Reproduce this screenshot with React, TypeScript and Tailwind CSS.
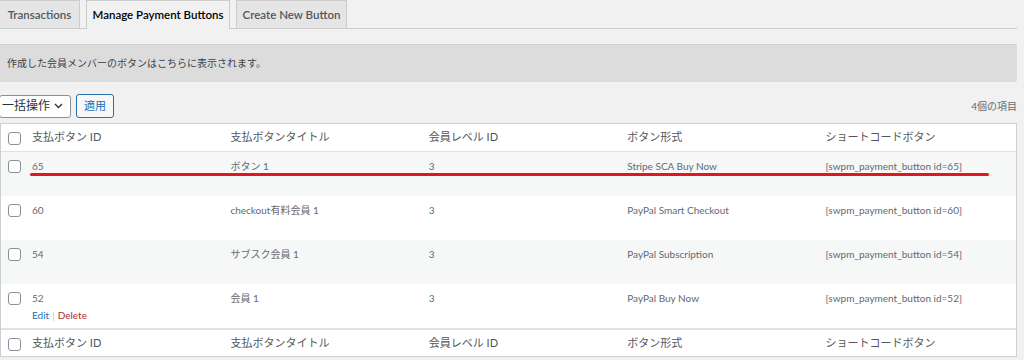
import React from 'react';

type Row = { id: string; title: string; level: string; type: string; actions?: boolean };

const rows: Row[] = [
  { id: '65', title: 'ボタン 1', level: '3', type: 'Stripe SCA Buy Now' },
  { id: '60', title: 'checkout有料会員 1', level: '3', type: 'PayPal Smart Checkout' },
  { id: '54', title: 'サブスク会員 1', level: '3', type: 'PayPal Subscription' },
  { id: '52', title: '会員 1', level: '3', type: 'PayPal Buy Now', actions: true },
];

const font = { fontFamily: 'Lato, "Noto Sans CJK JP", sans-serif' };

const Check: React.FC = () => (
  <span className="block w-[13px] h-[13px] rounded-[3px] border border-[#8c8f94] bg-white" />
);

const HeadRow: React.FC<{ top?: boolean }> = ({ top }) => (
  <div
    className={`grid grid-cols-[23px_repeat(5,1fr)] h-[28px] items-center text-[11px] text-[#50575e] bg-white ${
      top ? 'border-b border-[#e1e1e1]' : 'border-t-2 border-[#e1e1e1]'
    }`}
  >
    <div className="pl-[7px] pt-[2px]">
      <Check />
    </div>
    <div className="pl-[8px]">支払ボタン ID</div>
    <div className="pl-[8px]">支払ボタンタイトル</div>
    <div className="pl-[8px]">会員レベル ID</div>
    <div className="pl-[8px]">ボタン形式</div>
    <div className="pl-[8px]">ショートコードボタン</div>
  </div>
);

export default function App() {
  return (
    <div className="relative w-[1024px] h-[360px] overflow-hidden bg-[#f1f1f1] pr-[7px]" style={font}>
      {/* tabs */}
      <div className="flex items-end gap-[6px] h-[29px] border-b border-[#ccc] whitespace-nowrap">
        <div className="h-[28px] w-[81px] -ml-[1px] flex items-center justify-center bg-[#e5e5e5] border border-b-0 border-[#ccc] text-[11.5px] font-semibold text-[#50575e]">
          Transactions
        </div>
        <div className="h-[29px] w-[144px] -mb-[1px] flex items-center justify-center bg-[#f1f1f1] border border-b-0 border-[#ccc] text-[11.5px] font-semibold text-black">
          Manage Payment Buttons
        </div>
        <div className="h-[28px] w-[111px] flex items-center justify-center bg-[#e5e5e5] border border-b-0 border-[#ccc] text-[11.5px] font-semibold text-[#50575e]">
          Create New Button
        </div>
      </div>

      {/* notice */}
      <div className="mt-[15px] h-[38px] flex items-center pl-[7px] bg-[#dcdcdc] border-t border-[#d0d0d0] rounded-r-[2px] text-[10px] text-[#3c434a]">
        作成した会員メンバーのボタンはこちらに表示されます。
      </div>

      {/* tablenav */}
      <div className="mt-[12px] h-[24px] flex items-center">
        <div className="h-[23px] w-[72px] -ml-[1px] flex items-center justify-between pl-[2px] pr-[7px] bg-white border border-[#8c8f94] rounded-[3px] text-[12px] text-[#2c3338]">
          <span>一括操作</span>
          <svg width="9" height="6" viewBox="0 0 9 6" fill="none">
            <path d="M1 1l3.5 3.5L8 1" stroke="#2c3338" strokeWidth="1.3" />
          </svg>
        </div>
        <div className="ml-[5px] h-[24px] w-[38px] flex items-center justify-center bg-[#f6f7f7] border border-[#2271b1] rounded-[3px] text-[11px] text-[#2271b1]">
          適用
        </div>
        <div className="ml-auto text-[10px] text-[#646970]">4個の項目</div>
      </div>

      {/* table */}
      <div className="mt-[5px] border border-[#ccd0d4] bg-white">
        <HeadRow top />
        {rows.map((r, i) => (
          <div
            key={r.id}
            className={`grid grid-cols-[23px_repeat(5,1fr)] h-[44px] text-[10px] text-[#646970] ${
              i % 2 === 0 ? 'bg-[#f6f7f7]' : 'bg-white'
            }`}
          >
            <div className="pl-[7px] pt-[8px]">
              <Check />
            </div>
            <div className="pl-[8px] pt-[6px] leading-[16px]">
              <div>{r.id}</div>
              {r.actions && (
                <div className="flex items-center gap-[3px] mt-[1px]">
                  <span className="text-[#2271b1]">Edit</span>
                  <span className="text-[#c3c4c7]">|</span>
                  <span className="text-[#b32d2e]">Delete</span>
                </div>
              )}
            </div>
            <div className="pl-[8px] pt-[6px] leading-[16px]">{r.title}</div>
            <div className="pl-[8px] pt-[6px] leading-[16px]">{r.level}</div>
            <div className="pl-[8px] pt-[6px] leading-[16px]">{r.type}</div>
            <div className="pl-[8px] pt-[6px] leading-[16px]">[swpm_payment_button id={r.id}]</div>
          </div>
        ))}
        <HeadRow />
      </div>

      {/* red annotation underline */}
      <div className="absolute left-[30px] top-[173px] w-[959px] h-[3px] rounded-full bg-[#e3161e]" />
    </div>
  );
}
